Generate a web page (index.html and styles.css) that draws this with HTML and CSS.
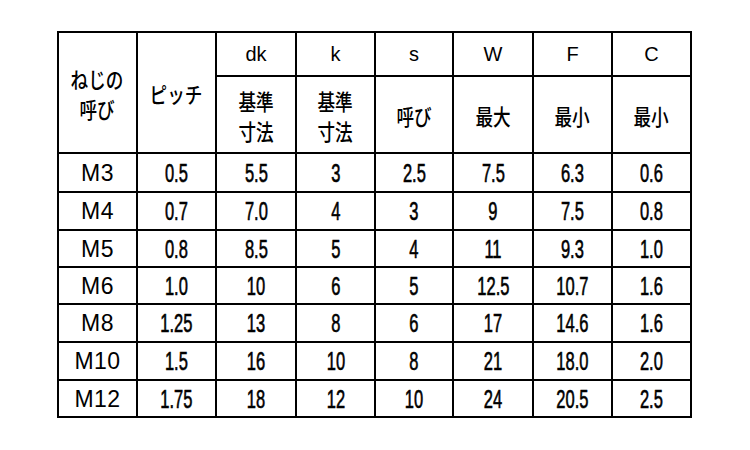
FILE: index.html
```html
<!DOCTYPE html>
<html lang="ja">
<head>
<meta charset="utf-8">
<link rel="stylesheet" href="styles.css">
</head>
<body>
<div class="wrap">
<table class="spec">
  <colgroup>
    <col class="c1"><col class="c2"><col class="c3"><col class="c4"><col class="c5"><col class="c6"><col class="c7"><col class="c8">
  </colgroup>
  <tr class="h1">
    <td rowspan="2"><span class="jp jp-tight">ねじの<br>呼び</span></td>
    <td rowspan="2"><span class="jp">ピッチ</span></td>
    <td class="lat">dk</td>
    <td class="lat">k</td>
    <td class="lat">s</td>
    <td class="lat">W</td>
    <td class="lat">F</td>
    <td class="lat">C</td>
  </tr>
  <tr class="h2">
    <td><span class="jp jp-two">基準<br>寸法</span></td>
    <td><span class="jp jp-two">基準<br>寸法</span></td>
    <td><span class="jp">呼び</span></td>
    <td><span class="jp">最大</span></td>
    <td><span class="jp">最小</span></td>
    <td><span class="jp">最小</span></td>
  </tr>
  <tr class="r1"><td class="m">M3</td><td><span class="n">0.5</span></td><td><span class="n">5.5</span></td><td><span class="n">3</span></td><td><span class="n">2.5</span></td><td><span class="n">7.5</span></td><td><span class="n">6.3</span></td><td><span class="n">0.6</span></td></tr>
  <tr class="r2"><td class="m">M4</td><td><span class="n">0.7</span></td><td><span class="n">7.0</span></td><td><span class="n">4</span></td><td><span class="n">3</span></td><td><span class="n">9</span></td><td><span class="n">7.5</span></td><td><span class="n">0.8</span></td></tr>
  <tr class="r3"><td class="m">M5</td><td><span class="n">0.8</span></td><td><span class="n">8.5</span></td><td><span class="n">5</span></td><td><span class="n">4</span></td><td><span class="n">11</span></td><td><span class="n">9.3</span></td><td><span class="n">1.0</span></td></tr>
  <tr class="r4"><td class="m">M6</td><td><span class="n">1.0</span></td><td><span class="n">10</span></td><td><span class="n">6</span></td><td><span class="n">5</span></td><td><span class="n">12.5</span></td><td><span class="n">10.7</span></td><td><span class="n">1.6</span></td></tr>
  <tr class="r5"><td class="m">M8</td><td><span class="n">1.25</span></td><td><span class="n">13</span></td><td><span class="n">8</span></td><td><span class="n">6</span></td><td><span class="n">17</span></td><td><span class="n">14.6</span></td><td><span class="n">1.6</span></td></tr>
  <tr class="r6"><td class="m">M10</td><td><span class="n">1.5</span></td><td><span class="n">16</span></td><td><span class="n">10</span></td><td><span class="n">8</span></td><td><span class="n">21</span></td><td><span class="n">18.0</span></td><td><span class="n">2.0</span></td></tr>
  <tr class="r7"><td class="m">M12</td><td><span class="n">1.75</span></td><td><span class="n">18</span></td><td><span class="n">12</span></td><td><span class="n">10</span></td><td><span class="n">24</span></td><td><span class="n">20.5</span></td><td><span class="n">2.5</span></td></tr>
</table>
</div>
</body>
</html>
```

FILE: styles.css
```css
html, body {
  margin: 0;
  padding: 0;
  background: #ffffff;
}

.wrap {
  padding: 31px 0 0 57px;
}

.spec {
  border-collapse: collapse;
  table-layout: fixed;
  width: 635px;
  color: #000;
  font-family: "Liberation Sans", Arial, "Noto Sans CJK JP", sans-serif;
}

.c1 { width: 79px; }
.c2 { width: 79px; }
.c3 { width: 80px; }
.c4 { width: 79px; }
.c5 { width: 78px; }
.c6 { width: 80px; }
.c7 { width: 79px; }
.c8 { width: 79px; }

.spec td {
  border: 2px solid #000;
  padding: 0;
  text-align: center;
  vertical-align: middle;
  overflow: hidden;
  white-space: nowrap;
}

.h1 td { height: 42px; }
.h2 td { height: 75px; }
.r1 td { height: 37px; }
.r2 td { height: 36px; }
.r3 td { height: 35px; }
.r4 td { height: 35px; }
.r5 td { height: 36px; }
.r6 td { height: 36px; }
.r7 td { height: 35px; }

.lat {
  font-size: 20px;
  line-height: 22px;
  padding-top: 2px;
}

.jp {
  display: inline-block;
  font-family: "Noto Sans CJK JP", sans-serif;
  font-size: 22px;
  font-weight: 500;
  line-height: 28px;
  transform: scaleX(0.8);
  transform-origin: center;
}

.jp-tight { line-height: 30px; }
.jp-two { line-height: 30px; }

.m {
  font-size: 23px;
  line-height: 26px;
  letter-spacing: 0.5px;
}

.n {
  display: inline-block;
  font-size: 25px;
  font-weight: 400;
  line-height: 26px;
  transform: scaleX(0.66);
  transform-origin: center;
  -webkit-text-stroke: 0.6px #000;
}
```
